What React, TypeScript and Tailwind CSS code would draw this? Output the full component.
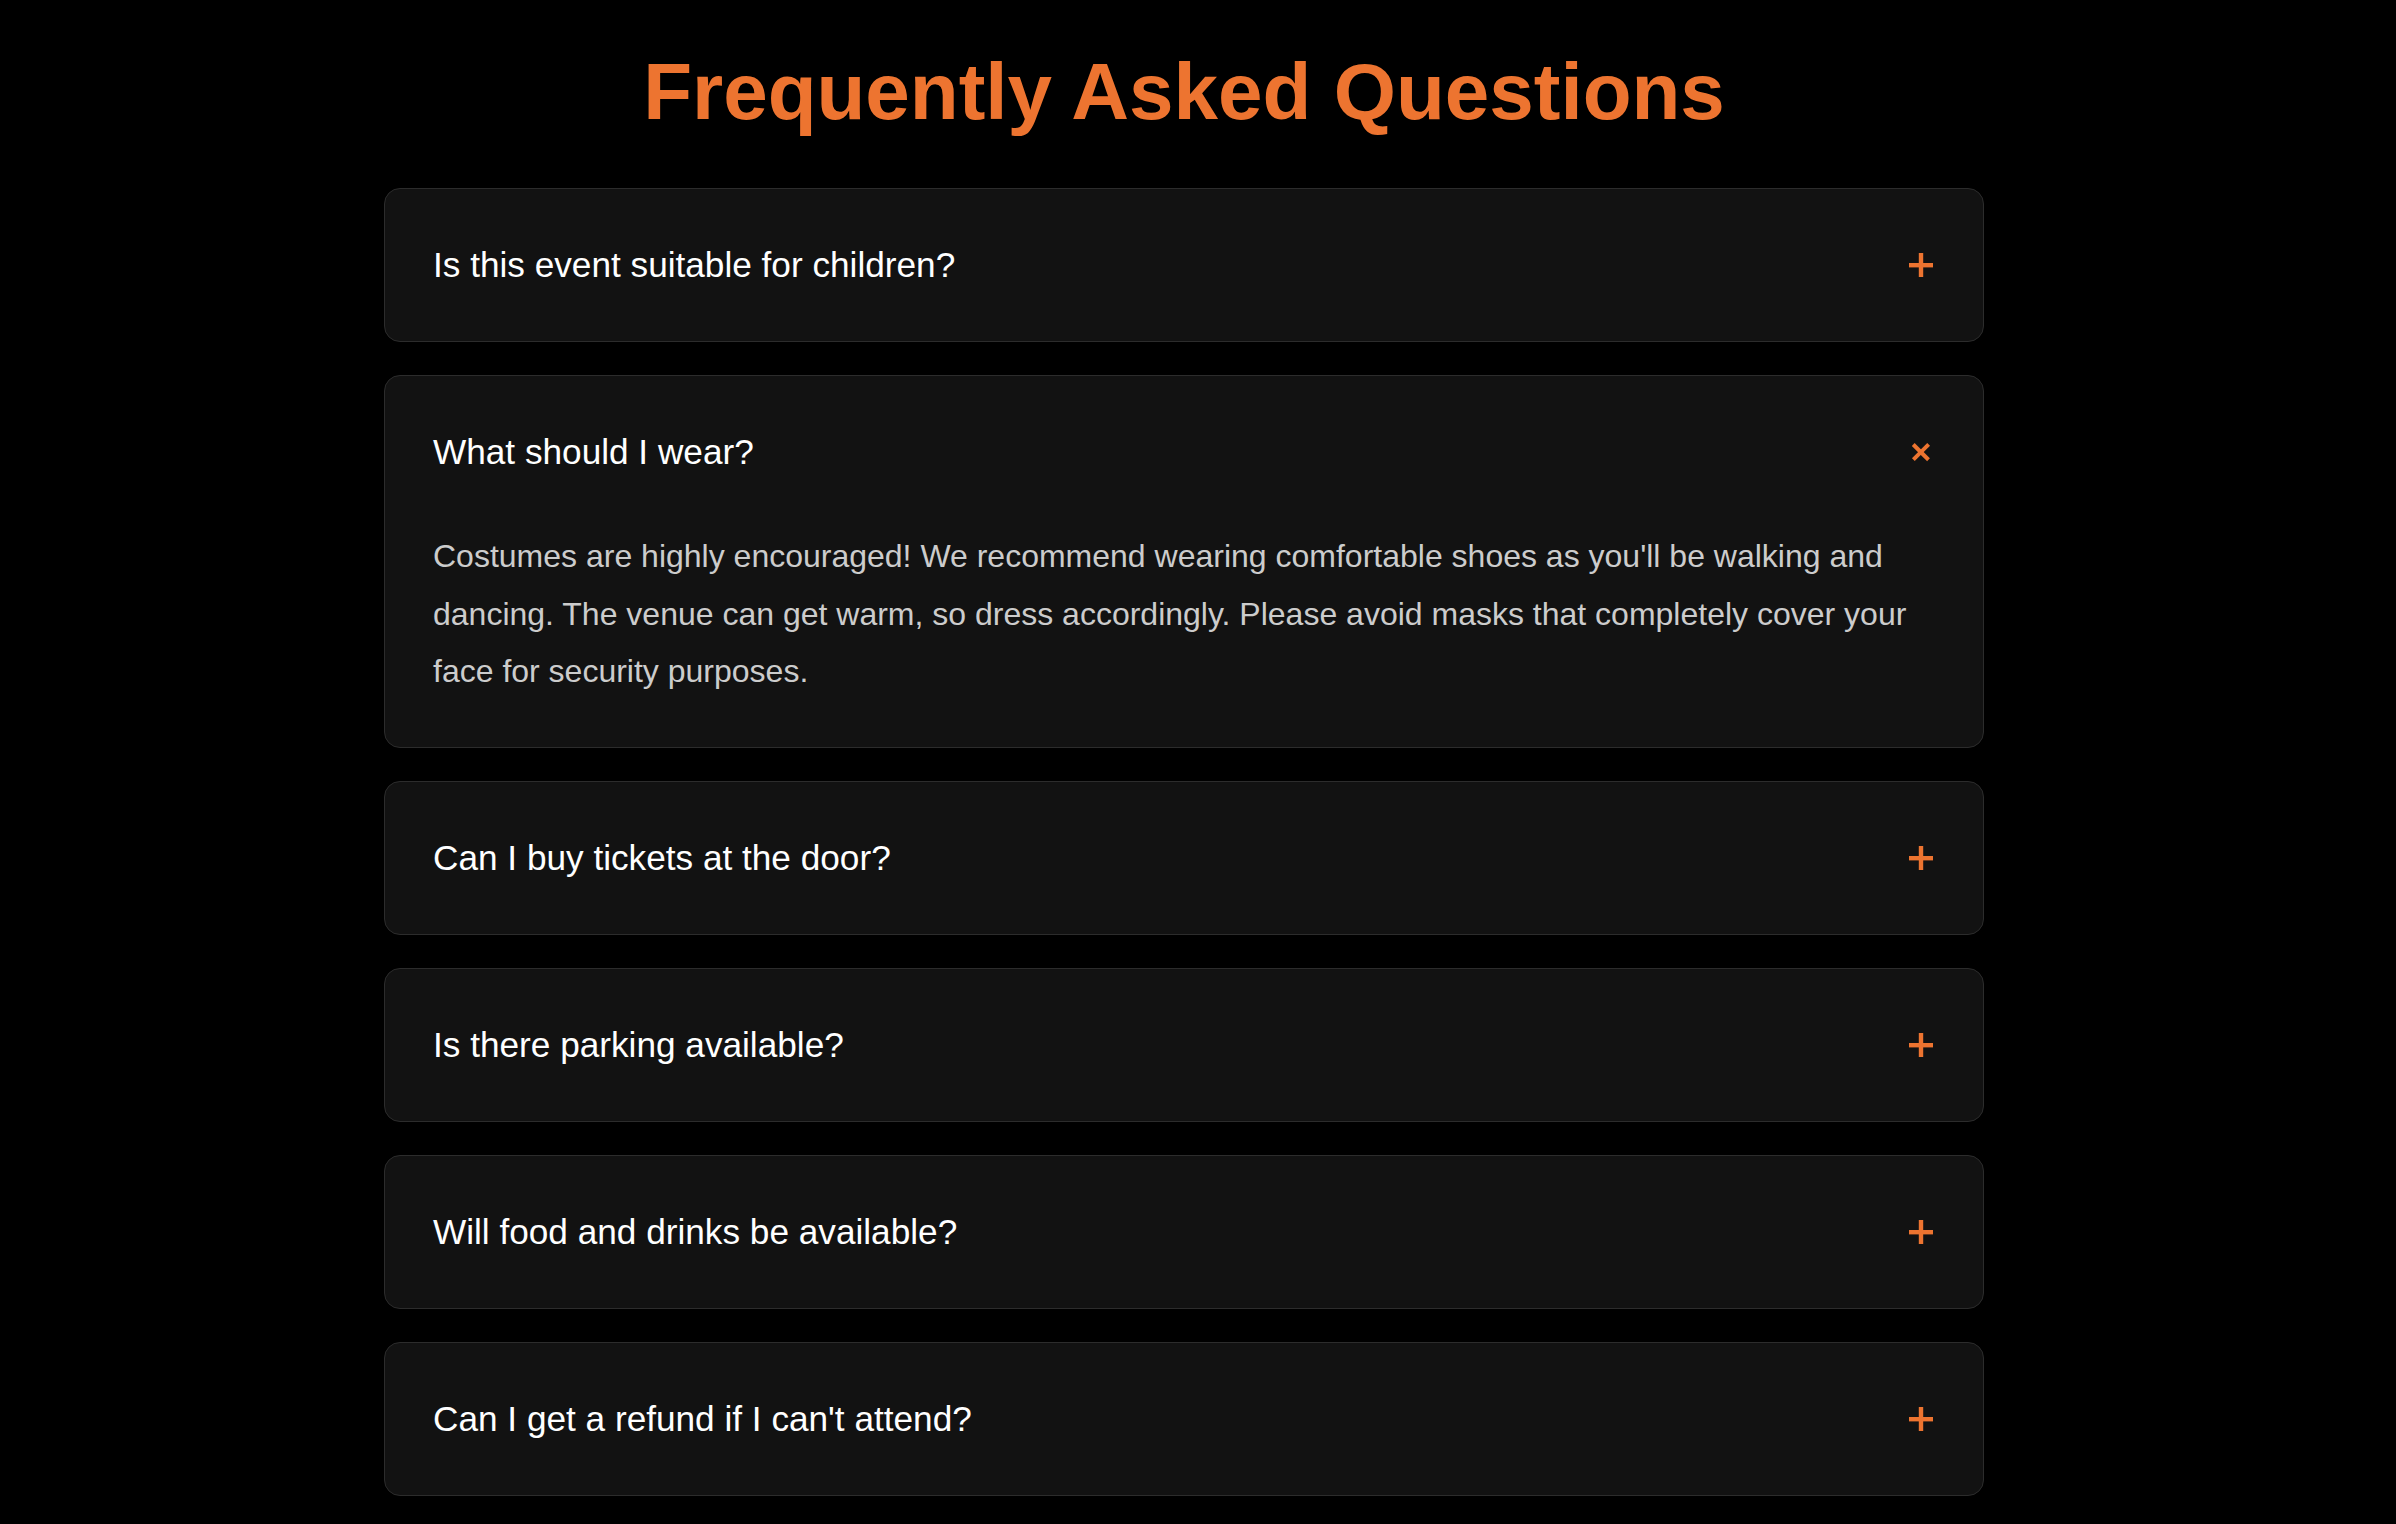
import React from "react";

const faqs = [
  {
    q: "Is this event suitable for children?",
    a: "Yes! Families are welcome. Children under 12 must be accompanied by an adult.",
  },
  {
    q: "What should I wear?",
    a: "Costumes are highly encouraged! We recommend wearing comfortable shoes as you'll be walking and dancing. The venue can get warm, so dress accordingly. Please avoid masks that completely cover your face for security purposes.",
  },
  { q: "Can I buy tickets at the door?", a: "Tickets may be available at the door, subject to capacity." },
  { q: "Is there parking available?", a: "Yes, free parking is available on site." },
  { q: "Will food and drinks be available?", a: "Food trucks and a full bar will be on site." },
  { q: "Can I get a refund if I can't attend?", a: "Refunds are available up to 7 days before the event." },
];

const PlusIcon = ({ open }: { open: boolean }) => (
  <svg
    width="28"
    height="28"
    viewBox="0 0 28 28"
    className={open ? "shrink-0 rotate-45 scale-90" : "shrink-0"}
  >
    <rect x="2" y="12" width="24" height="4.4" fill="#ed7430" />
    <rect x="11.8" y="2" width="4.4" height="24" fill="#ed7430" />
  </svg>
);

export default function App() {
  const [openIndex, setOpenIndex] = React.useState<number>(1);

  return (
    <div className="min-h-screen bg-black pr-[28px] font-['Liberation_Sans',Arial,sans-serif]">
      <div className="max-w-[1600px] mx-auto pt-[44px] pb-[32px]">
        <h1 className="text-center text-[80px] leading-[96px] font-bold text-[#ed7430] mb-[48px]">
          Frequently Asked Questions
        </h1>
        <div className="flex flex-col gap-[33px]">
          {faqs.map((item, i) => {
            const open = openIndex === i;
            return (
              <div
                key={item.q}
                className="bg-[#121212] border border-[#2c2c2c] rounded-[16px]"
              >
                <button
                  onClick={() => setOpenIndex(open ? -1 : i)}
                  className="w-full flex items-center justify-between px-[48px] py-[48px] text-left cursor-pointer"
                >
                  <span className="text-white text-[35.2px] leading-[56px]">{item.q}</span>
                  <PlusIcon open={open} />
                </button>
                {open && (
                  <div className="px-[48px] pb-[46px]">
                    <p className="text-[#cccccc] text-[32px] leading-[57.6px]">{item.a}</p>
                  </div>
                )}
              </div>
            );
          })}
        </div>
      </div>
    </div>
  );
}
